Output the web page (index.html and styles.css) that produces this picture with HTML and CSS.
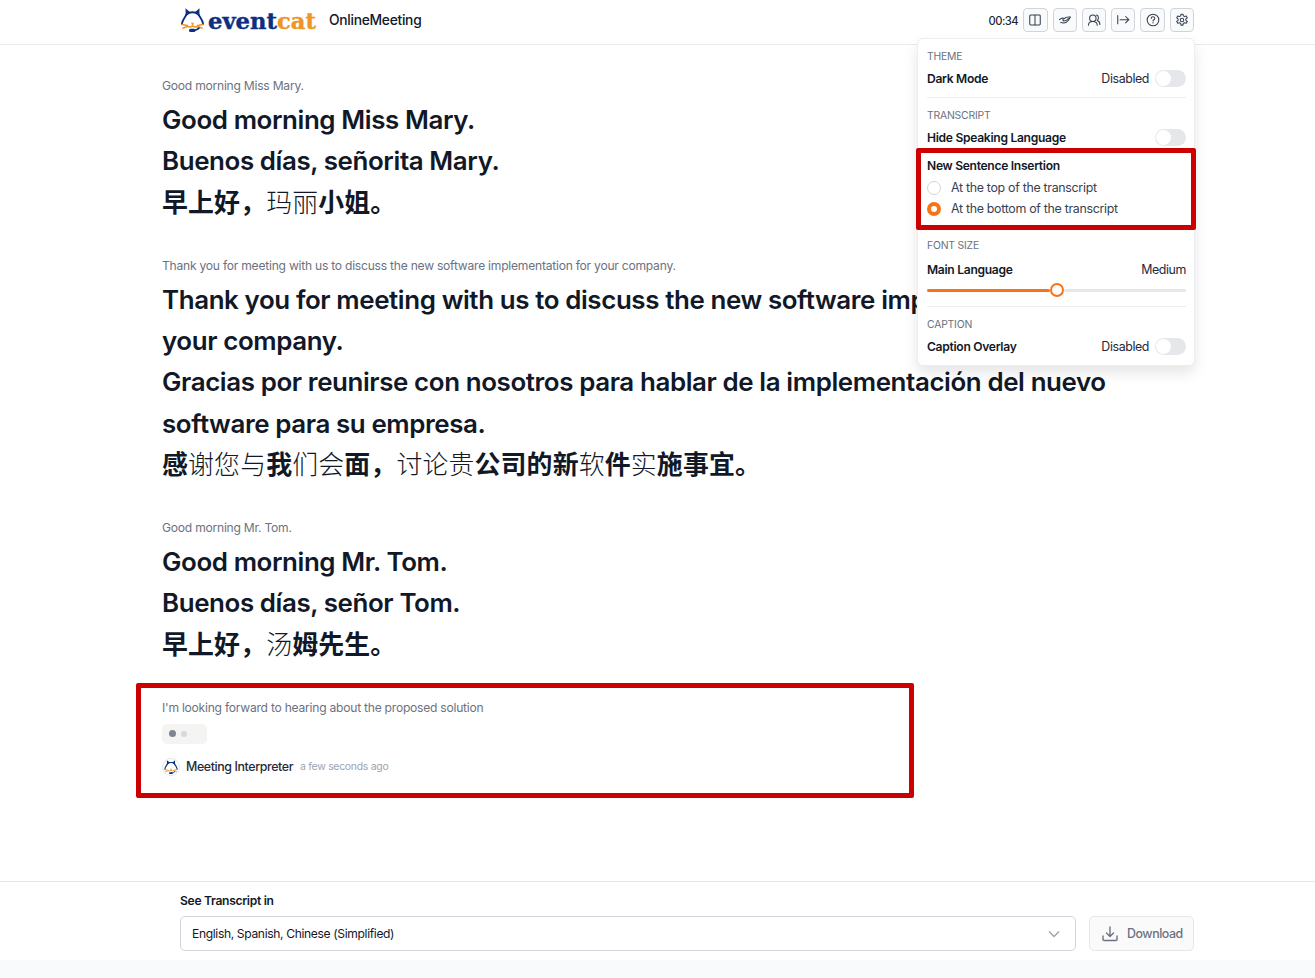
FILE: index.html
```
<!DOCTYPE html>
<html lang="en">
<head>
	<meta charset="utf-8">
	<title>OnlineMeeting - eventcat</title>
	<meta name="viewport" content="width=device-width, initial-scale=1.0">
	<link rel="stylesheet" href="styles.css">
</head>
<body>
	<svg class="defs" width="0" height="0">
		<symbol id="cat" viewBox="0 0 24 24">
			<path d="M5.800 6.500C4.800 9.500 1.800 11.500 1.400 16M18.200 6.500C19.200 9.500 22.200 11.500 22.600 16M8 4.800Q12 3.600 16 4.800" fill="none" stroke="#0b2f82" stroke-width="1.900" stroke-linecap="round"/>
			<path d="M5 .3 10.200 4.800 5.200 8.500zM19 .3 13.800 4.800 18.800 8.500z" fill="#0b2f82"/>
			<path d="M1.500 16.500l5.500 1M2.500 20l4.500-1.500M22.500 16.500l-5.500 1M21.500 20l-4.500-1.500M7.500 18.500q2.500 1.500 4.500-.8q2 2.300 4.500 .8M12 17.500v-1.500" fill="none" stroke="#ef9526" stroke-width="1.500" stroke-linecap="round"/>
			<path d="M10.300 14.800h3.400L12 17z" fill="#ef9526"/>
			<path d="M12 22.600q4.500 0 7-3" fill="none" stroke="#0b2f82" stroke-width="1.600"/>
			<rect x="8.500" y="20.800" width="6.500" height="3.200" rx="1.600" fill="#0b2f82"/>
		</symbol>
	</svg>

	<header class="topbar">
		<div class="topbar-inner">
			<svg class="logo-cat"><use href="#cat"/></svg>
			<svg class="wordmark" viewBox="0 0 110 26">
				<text x="0" y="21.500" textLength="108" lengthAdjust="spacingAndGlyphs"><tspan class="navy">event</tspan><tspan class="orange">cat</tspan></text>
			</svg>
			<span class="room">OnlineMeeting</span>
			<div class="tools">
				<span class="timer">00:34</span>
				<button class="tool"><svg viewBox="0 0 24 24"><rect x="3" y="3.500" width="18" height="17" rx="1.500"/><path d="M12 3.500v17"/></svg></button>
				<button class="tool"><svg viewBox="0 0 24 24"><path d="M2.500 11.500C6 8 9 8.500 11 9.500l3-2c1.500-1 4-.5 7.500-.5-2 1.500-2 3-3.500 5.500-2 3-5 4.500-8.500 4.500-2 0-3-1.500-5-.5M9 13.500l4-.5c2-.5 4-2.500 4.500-3.500M11 9.500c-2 1-3 2-2.500 3"/></svg></button>
				<button class="tool"><svg viewBox="0 0 24 24"><circle cx="10" cy="9" r="5.500"/><path d="M2.500 21c0-4 3-6.500 7.500-6.500s7.500 2.500 7.500 6.500M16 3.500c4 .5 5 6.500 1.500 9.500 3 1 4.500 3.500 4.500 6.500"/></svg></button>
				<button class="tool"><svg viewBox="0 0 24 24"><path d="M3 4.500v14M7 11.500h15M16.500 6l5.500 5.500-5.500 5.500"/></svg></button>
				<button class="tool"><svg viewBox="0 0 24 24"><circle cx="12" cy="12" r="10"/><path d="M9 9.500c0-4 6-4 6-.2 0 2.200-3 2.200-3 4.400M12 16.500v.8"/></svg></button>
				<button class="tool"><svg viewBox="0 0 24 24"><circle cx="12" cy="12" r="3"/><path d="M10.300 2h3.400l.6 3 2.100 1.200 2.900-1 1.700 3-2.300 2v2.400l2.300 2-1.700 3-2.900-1-2.100 1.200-.6 3h-3.400l-.6-3-2.100-1.200-2.900 1-1.700-3 2.300-2v-2.400l-2.300-2 1.700-3 2.900 1 2.100-1.200z"/></svg></button>
			</div>

			<div class="settings">
				<section>
					<h3>Theme</h3>
					<div class="row"><b>Dark Mode</b><span class="state">Disabled</span><i class="switch"></i></div>
				</section>
				<section class="transcript-opts">
					<h3>Transcript</h3>
					<div class="row"><b>Hide Speaking Language</b><i class="switch"></i></div>
					<div class="insertion">
						<b>New Sentence Insertion</b>
						<label><i class="radio"></i>At the top of the transcript</label>
						<label><i class="radio checked"></i>At the bottom of the transcript</label>
					</div>
				</section>
				<section class="fontsize">
					<h3>Font size</h3>
					<div class="row"><b>Main Language</b><span class="state">Medium</span></div>
					<div class="slider"><i class="filled"></i><i class="knob"></i><i class="rest"></i></div>
				</section>
				<section>
					<h3>Caption</h3>
					<div class="row"><b>Caption Overlay</b><span class="state">Disabled</span><i class="switch"></i></div>
				</section>
				<div class="mark mark-settings"></div>
			</div>
		</div>
	</header>

	<main>
		<article>
			<p class="source">Good morning Miss Mary.</p>
			<p>Good morning Miss Mary.</p>
			<p lang="es">Buenos días, señorita Mary.</p>
			<p lang="zh-CN">早上好，<span class="thin">玛丽</span>小姐。</p>
		</article>
		<article>
			<p class="source">Thank you for meeting with us to discuss the new software implementation for your company.</p>
			<p>Thank you for meeting with us to discuss the new software implementation for your company.</p>
			<p lang="es">Gracias por reunirse con nosotros para hablar de la implementación del nuevo software para su empresa.</p>
			<p lang="zh-CN">感<span class="thin">谢您与</span>我<span class="thin">们会</span>面，<span class="thin">讨论贵</span>公司的新<span class="thin">软</span>件<span class="thin">实</span>施事宜。</p>
		</article>
		<article>
			<p class="source">Good morning Mr. Tom.</p>
			<p>Good morning Mr. Tom.</p>
			<p lang="es">Buenos días, señor Tom.</p>
			<p lang="zh-CN">早上好，<span class="thin">汤</span>姆先生。</p>
		</article>
		<article class="live">
			<p class="source">I'm looking forward to hearing about the proposed solution</p>
			<div class="typing"><i></i><i></i></div>
			<div class="speaker">
				<span class="avatar"><svg><use href="#cat"/></svg></span>
				<span class="name">Meeting Interpreter</span>
				<span class="ago">a few seconds ago</span>
			</div>
			<div class="mark mark-live"></div>
		</article>
	</main>

	<footer>
		<div class="footer-inner">
			<label class="lang-label">See Transcript in</label>
			<div class="controls">
				<div class="select">
					<span>English, Spanish, Chinese (Simplified)</span>
					<svg viewBox="0 0 12 8"><path d="M1 1.500l5 5 5-5"/></svg>
				</div>
				<button class="download">
					<svg viewBox="0 0 16 16"><path d="M8 1v9.500M4.500 7L8 10.500 11.500 7M1 10v3.500q0 1 1 1h12q1 0 1-1V10"/></svg>
					<span>Download</span>
				</button>
			</div>
		</div>
	</footer>
</body>
</html>
```

FILE: styles.css
```
* { box-sizing: border-box; }
html { background: #f9fafb; }
body {
	margin: 0;
	height: 960px;
	display: flex;
	flex-direction: column;
	background: #fff;
	color: #111827;
	font-family: Inter, "Noto Sans CJK SC", sans-serif;
	font-size: 12.4px;
	letter-spacing: -.3px;
}
p, h3 { margin: 0; }
i { display: block; }
b { font-weight: 600; }
button { font-family: inherit; letter-spacing: inherit; padding: 0; }
.defs { position: absolute; }

/* header */
.topbar { height: 45px; border-bottom: 1px solid #e9eaed; }
.topbar-inner {
	position: relative;
	width: 1014px;
	height: 40px;
	margin-left: 180px;
	display: flex;
	align-items: center;
}
.logo-cat { width: 25px; height: 24px; }
.wordmark { width: 110px; height: 26px; margin-left: 3px; }
.wordmark text { font: bold 22.500px "DejaVu Serif", serif; letter-spacing: 0; stroke-width: .4; }
.navy { fill: #0b2f82; stroke: #0b2f82; }
.orange { fill: #ef9526; stroke: #ef9526; }
.room { margin-left: 11px; font-size: 13.8px; font-weight: 500; letter-spacing: -.28px; }
.tools { margin-left: auto; display: flex; align-items: center; gap: 5px; }
.timer { padding-top: 1px; font-size: 11.2px; font-weight: 500; letter-spacing: -.5px; color: #1f2937; }
.tool {
	width: 24.300px;
	height: 24px;
	display: flex;
	align-items: center;
	justify-content: center;
	background: #f9fafb;
	border: 1px solid #d1d5db;
	border-radius: 4px;
}
.tool svg { width: 14px; height: 14px; fill: none; stroke: #374151; stroke-width: 1.800; stroke-linecap: round; stroke-linejoin: round; }

/* settings menu */
.settings {
	position: absolute;
	z-index: 2;
	top: 38px;
	right: -1px;
	width: 278px;
	height: 328px;
	padding: 0 8px 0 9px;
	background: #fff;
	border: 1px solid #eceef1;
	border-radius: 6px;
	box-shadow: 0 7px 14px rgba(0, 0, 0, .1);
}
.settings section { height: 59px; padding-top: 11px; border-bottom: 1px solid #eceef1; }
.settings section:last-of-type { border: 0; }
.settings .transcript-opts { height: 130px; border: 0; }
.settings .fontsize { height: 79px; }
.settings h3 { font-size: 10.400px; line-height: 14px; font-weight: 400; letter-spacing: -.2px; color: #6b7280; text-transform: uppercase; }
.row { display: flex; align-items: center; height: 18px; margin-top: 5px; }
.fontsize .row { margin-top: 7px; }
.row b { margin-right: auto; }
.settings b { font-size: 12.100px; }
.state { color: #1f2937; letter-spacing: -.4px; }
.switch { width: 31px; height: 17px; margin-left: 6px; padding: 1px; border-radius: 9px; background: #e5e7eb; }
.switch::before { content: ""; display: block; width: 15px; height: 15px; border-radius: 50%; background: #fff; }
.insertion { padding-top: 11px; line-height: 17px; }
.insertion b { display: block; margin-bottom: 3px; }
.insertion label { display: flex; align-items: center; height: 21px; color: #374151; }
.radio { width: 14px; height: 14px; margin-right: 10px; border: 1px solid #d1d5db; border-radius: 50%; }
.radio.checked { border: 4.500px solid #f97316; }
.slider { display: flex; align-items: center; height: 14px; margin-top: 5px; }
.filled, .rest { flex: 1; height: 3px; border-radius: 2px; background: #e5e7eb; }
.filled { background: #f97316; }
.knob { width: 14px; height: 14px; border: 2px solid #f97316; border-radius: 50%; background: #fff; }

/* annotation frames */
.mark { position: absolute; border: 5px solid #c00; border-radius: 2px; }
.mark-settings { left: -2px; top: 109px; width: 280px; height: 82px; }
.mark-live { left: -26px; top: -18px; width: 778px; height: 115px; }

/* transcript */
main { flex: 1; width: 1153px; padding: 34px 0 0 162px; }
article { margin-bottom: 35.400px; font-size: 25.900px; font-weight: 620; line-height: 41.400px; letter-spacing: -.39px; }
article p:lang(zh) { letter-spacing: .15px; }
.source { font-size: 12.100px; font-weight: 400; line-height: 14px; letter-spacing: -.24px; margin-bottom: 6px; color: #6b7280; }
.thin { font-weight: 300; }
.live { position: relative; }
.typing { display: flex; align-items: center; gap: 5px; width: 45px; height: 20px; margin-top: 9px; padding-left: 7px; border-radius: 5px; background: #f4f4f3; }
.live .source { margin-bottom: 0; }
.typing i { width: 7px; height: 7px; border-radius: 50%; background: #7e8492; }
.typing i + i { width: 6px; height: 6px; background: #d6d8db; }
.speaker { display: flex; align-items: center; height: 18px; margin-top: 14px; line-height: 18px; }
.avatar { display: flex; align-items: center; justify-content: center; width: 18px; height: 18px; border: 1px solid #e5e7eb; border-radius: 50%; }
.avatar svg { width: 14px; height: 14px; }
.name { margin-left: 6px; font-size: 12.400px; font-weight: 500; color: #1f2937; }
.ago { margin-left: 7px; font-size: 10.400px; font-weight: 400; letter-spacing: -.25px; color: #9ca3af; }

/* footer */
footer { height: 79px; border-top: 1px solid #e5e7eb; }
.footer-inner { width: 1014px; margin-left: 180px; padding-top: 11px; }
.lang-label { display: block; line-height: 16px; font-size: 12.100px; font-weight: 600; }
.controls { display: flex; gap: 13px; margin-top: 7px; }
.select { flex: 1; display: flex; align-items: center; justify-content: space-between; height: 35px; padding: 0 15px 0 11px; border: 1px solid #d1d5db; border-radius: 5px; font-size: 12.100px; letter-spacing: -.36px; }
.select svg { width: 12px; height: 8px; fill: none; stroke: #9ca3af; stroke-width: 1.400; }
.download { display: flex; align-items: center; gap: 9px; width: 105px; height: 35px; padding-left: 12px; border: 1px solid #e5e7eb; border-radius: 5px; background: #fafafa; color: #6b7280; font-size: 12.400px; font-weight: 500; letter-spacing: -.45px; }
.download svg { width: 16px; height: 16px; fill: none; stroke: #6b7280; stroke-width: 1.400; stroke-linecap: round; stroke-linejoin: round; }
```
